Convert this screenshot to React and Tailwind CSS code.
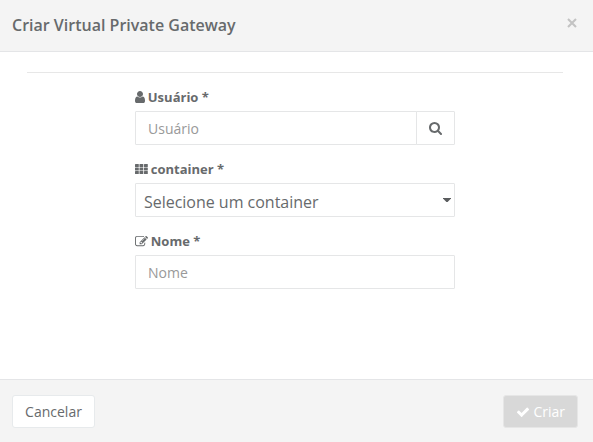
import React from "react";

function Glyph({ viewBox, className, children }) {
  return (
    <svg viewBox={viewBox} className={`inline-block shrink-0 fill-current ${className}`} aria-hidden="true">
      {children}
    </svg>
  );
}

const UserIcon = () => (
  <Glyph viewBox="256 0 1280 1792" className="h-[14px] w-[10px]">
    <path d="M1536 1399q0 109-62.5 187t-150.5 78h-854q-88 0-150.5-78t-62.5-187q0-85 8.5-160.5t31.5-152 58.5-131 94-89 134.5-34.5q131 128 313 128t313-128q76 0 134.5 34.5t94 89 58.5 131 31.5 152 8.5 160.5zm-256-887q0 159-112.5 271.5t-271.5 112.5-271.5-112.5-112.5-271.5 112.5-271.5 271.5-112.5 271.5 112.5 112.5 271.5z" />
  </Glyph>
);

const GridIcon = () => (
  <Glyph viewBox="0 0 13 12" className="h-[12px] w-[13px]">
    {[1, 4.5, 8].map((y) =>
      [0, 4.5, 9].map((x) => <rect key={`${x}-${y}`} x={x} y={y} width="3.8" height="2.9" rx="0.5" />)
    )}
  </Glyph>
);

const EditIcon = () => (
  <Glyph viewBox="0 0 1792 1792" className="h-[13px] w-[13px]">
    <path d="M888 1184l116-116-152-152-116 116v56h96v96h56zm440-720q-16-16-33 1l-350 350q-17 17-1 33t33-1l350-350q17-17 1-33zm80 594v190q0 119-84.5 203.5t-203.5 84.5h-832q-119 0-203.5-84.5t-84.5-203.5v-832q0-119 84.5-203.5t203.5-84.5h832q63 0 117 25 15 7 18 23 3 17-9 29l-49 49q-14 14-32 8-23-6-45-6h-832q-66 0-113 47t-47 113v832q0 66 47 113t113 47h832q66 0 113-47t47-113v-126q0-13 9-22l64-64q15-15 35-7t20 29zm-96-738l288 288-672 672h-288v-288zm444 132l-92 92-288-288 92-92q28-28 68-28t68 28l152 152q28 28 28 68t-28 68z" />
  </Glyph>
);

const SearchIcon = () => (
  <Glyph viewBox="64 0 1664 1792" className="h-[14px] w-[13px]">
    <path d="M1216 832q0-185-131.5-316.5t-316.5-131.5-316.5 131.5-131.5 316.5 131.5 316.5 316.5 131.5 316.5-131.5 131.5-316.5zm512 832q0 52-38 90t-90 38q-54 0-90-38l-343-342q-179 124-399 124-143 0-273.5-55.5t-225-150-150-225-55.5-273.5 55.5-273.5 150-225 225-150 273.5-55.5 273.5 55.5 225 150 150 225 55.5 273.5q0 220-124 399l343 343q37 37 37 90z" />
  </Glyph>
);

const CheckIcon = () => (
  <Glyph viewBox="0 0 1792 1792" className="h-[14px] w-[14px]">
    <path d="M1671 566q0 40-28 68l-724 724-136 136q-28 28-68 28t-68-28l-136-136-362-362q-28-28-28-68t28-68l136-136q28-28 68-28t68 28l294 295 656-657q28-28 68-28t68 28l136 136q28 28 28 68z" />
  </Glyph>
);

function Field({ icon, label, children }) {
  return (
    <div className="mb-[15px]">
      <div className="mb-[5px] flex h-[18px] items-center gap-[2.8px] text-[13px] leading-[18px] font-bold">
        {icon}
        <span>{label}</span>
      </div>
      {children}
    </div>
  );
}

const inputClass =
  "block h-[34px] min-w-0 rounded-[1px] border border-[#e5e6e7] bg-white px-3 text-[14px] leading-5 outline-none placeholder:text-[#999999] placeholder:opacity-100";

export default function App() {
  return (
    <div className="flex h-[442px] w-[593px] flex-col bg-white font-['Open_Sans',sans-serif] text-[#676a6c]">
      <header className="flex h-[52px] items-start justify-between border-b border-[#e4e5e7] bg-[#f4f4f4] pt-[14px] pr-4 pl-3">
        <h1 className="text-[16px] leading-[22px] font-semibold">Criar Virtual Private Gateway</h1>
        <button aria-label="Fechar" className="pt-[3.5px] text-[#c3c3c3]">
          <svg viewBox="0 0 10 10" className="block h-[10px] w-[10px]" fill="none" stroke="currentColor" strokeWidth="2.1">
            <path d="M1 1L9 9M9 1L1 9" />
          </svg>
        </button>
      </header>

      <main className="flex-1 pt-5 pr-[30px] pl-[27px]">
        <hr className="mb-[15px] border-t border-[#e7e7e7]" />
        <div className="mx-auto w-80">
          <Field icon={<UserIcon />} label="Usuário *">
            <div className="flex">
              <input className={`${inputClass} flex-1 rounded-r-none`} placeholder="Usuário" />
              <button aria-label="Buscar" className="-ml-px flex h-[34px] w-[39px] items-center justify-center rounded-r-[1px] border border-[#e5e6e7] bg-white">
                <SearchIcon />
              </button>
            </div>
          </Field>
          <Field icon={<GridIcon />} label="container *">
            <div className="flex h-[34px] items-center justify-between rounded-[1px] border border-[#e5e6e7] bg-white pr-[3px] pl-2">
              <span className="pt-[3px] text-[16px] leading-6 tracking-[-0.02px]">Selecione um container</span>
              <svg viewBox="0 0 8 4" className="h-1 w-2 fill-[#5a5c5e]" aria-hidden="true">
                <path d="M0 0H8V.6L4.6 4H3.4L0 .6Z" />
              </svg>
            </div>
          </Field>
          <Field icon={<EditIcon />} label="Nome *">
            <input className={`${inputClass} w-full`} placeholder="Nome" />
          </Field>
        </div>
      </main>

      <footer className="flex h-[63px] items-start justify-between border-t border-[#e4e5e7] bg-[#f4f4f4] pt-[15px] pr-[15px] pl-3">
        <button className="h-[33px] w-[83px] rounded-[3px] border border-[#e7eaec] bg-white text-[14px] leading-5">
          Cancelar
        </button>
        <button className="flex h-[33px] w-[75px] items-center justify-center gap-[3.6px] rounded-[3px] border border-[#e6e6e6] bg-[#d8d8d8] text-[14px] leading-5 text-white">
          <CheckIcon />
          <span>Criar</span>
        </button>
      </footer>
    </div>
  );
}
